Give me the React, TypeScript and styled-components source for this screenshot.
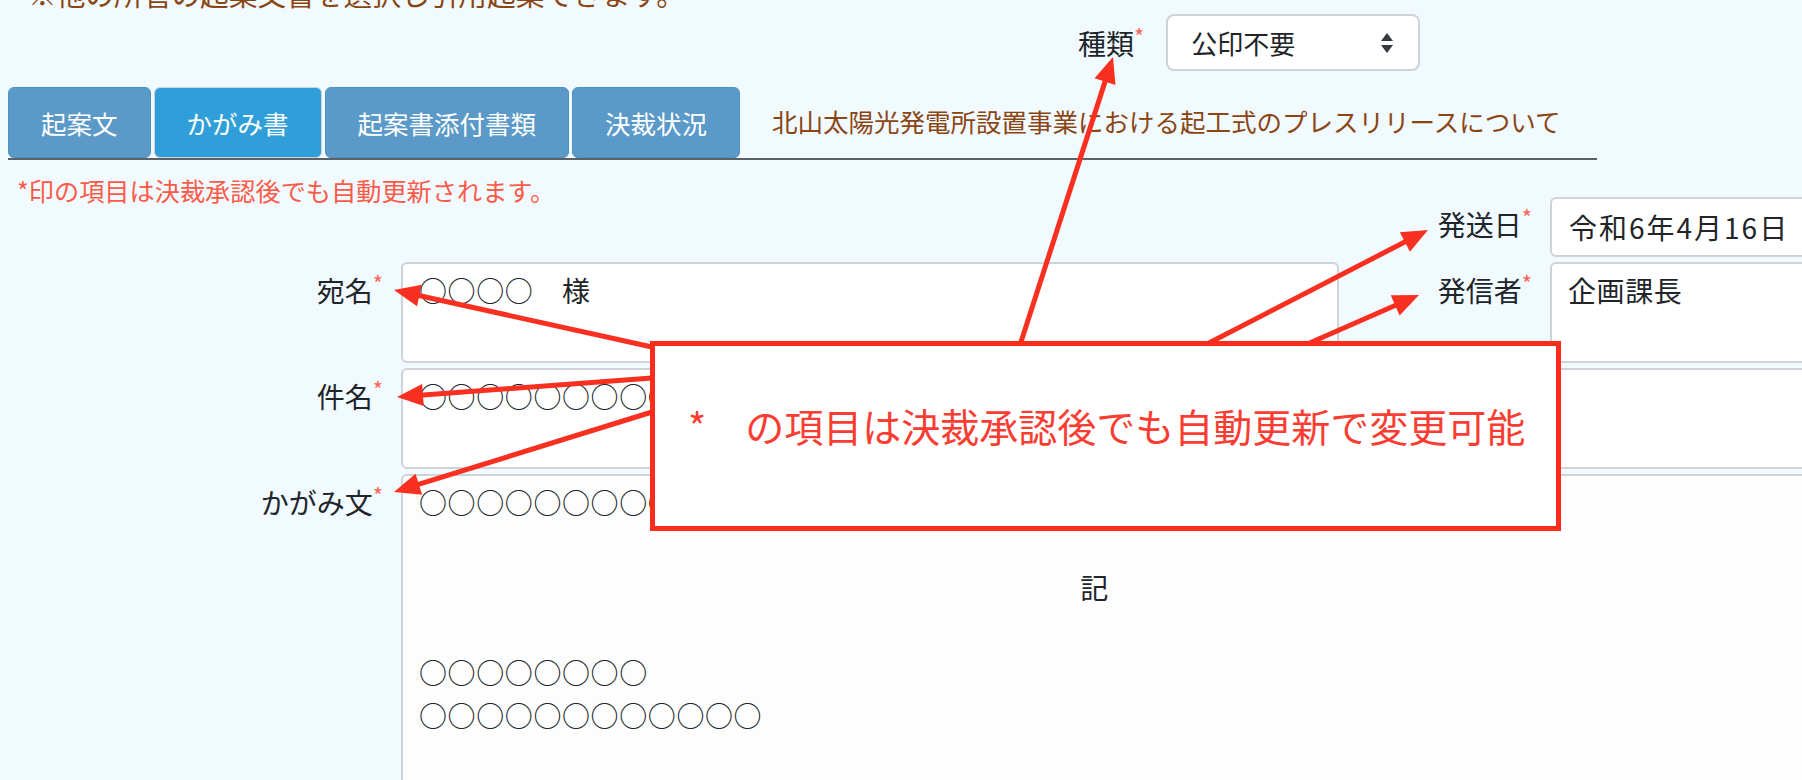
import React from "react";
import styled, { createGlobalStyle } from "styled-components";

const GlobalStyle = createGlobalStyle`
  html, body {
    margin: 0;
    padding: 0;
    background: #f0faff;
    overflow: hidden;
  }
  body {
    font-family: "Noto Sans CJK JP", "Noto Sans", sans-serif;
    color: #212529;
  }
`;

const Page = styled.div`
  position: relative;
  width: 1802px;
  height: 780px;
  overflow: hidden;
  background: #f0faff;
`;

const TopNote = styled.p`
  margin: -21px 0 0 0;
  padding-left: 28px;
  height: 30px;
  line-height: 30px;
  font-size: 28.7px;
  color: #8b4513;
  white-space: nowrap;
`;

const KindRow = styled.div`
  display: flex;
  align-items: center;
  gap: 22px;
  margin-top: 5px;
  padding-left: 1078px;
  height: 57px;
`;

const KindLabel = styled.span`
  font-size: 28px;
  line-height: 42px;
  white-space: nowrap;
`;

const Req = styled.span`
  color: #ff6652;
  font-size: 22px;
  vertical-align: super;
  line-height: 0;
`;

const Select = styled.div`
  box-sizing: border-box;
  width: 254px;
  height: 57px;
  display: flex;
  align-items: center;
  justify-content: space-between;
  padding: 0 24px 0 23px;
  background: #fff;
  border: 2px solid #cdd3d9;
  border-radius: 8px;
  font-size: 26px;
`;

const TabBar = styled.div`
  display: flex;
  gap: 3px;
  margin: 16px 0 0 8px;
  width: 1589px;
  height: 71px;
  border-bottom: 2px solid #5b6166;
`;

const Tab = styled.div<{ $active?: boolean }>`
  box-sizing: border-box;
  display: flex;
  align-items: center;
  height: 71px;
  padding: 0 32px;
  border: 1px solid ${(p) => (p.$active ? "#cfd3d6" : "#4d91c6")};
  border-radius: 6px;
  background: ${(p) => (p.$active ? "#309fd9" : "#5b9ac8")};
  color: #fff;
  font-size: 25.5px;
  white-space: nowrap;
`;

const DocTitle = styled.div`
  align-self: center;
  margin-left: 29px;
  padding-bottom: 4px;
  font-size: 25.5px;
  color: #8b4513;
  white-space: nowrap;
`;

const FormGrid = styled.div`
  display: grid;
  grid-template-columns: 401px 938px 211px 280px;
  grid-template-rows: 86px 101px 101px 330px;
  row-gap: 5px;
  margin-top: 11px;
`;

const Notice = styled.div`
  grid-column: 1 / 3;
  align-self: start;
  padding-left: 17px;
  font-size: 25.2px;
  line-height: 38px;
  color: #fd5a48;
  white-space: nowrap;
`;

const Label = styled.div<{ $pad?: number }>`
  align-self: start;
  padding: ${(p) => p.$pad ?? 7}px 18px 0 0;
  text-align: right;
  font-size: 28px;
  line-height: 42px;
  white-space: nowrap;
`;

const Box = styled.div<{ $soft?: boolean }>`
  box-sizing: border-box;
  border: 2px solid #cdd3d9;
  border-radius: 6px;
  background: ${(p) => (p.$soft ? "#fdfdfd" : "#fff")};
  padding: 5px 16px;
  font-size: 28px;
  line-height: 42px;
  letter-spacing: 0.6px;
  white-space: pre;
  overflow: hidden;
`;

const DateBox = styled(Box)`
  align-self: end;
  height: 60px;
  display: flex;
  align-items: center;
  padding: 0 17px;
  letter-spacing: 2px;
`;

const BigBox = styled(Box)`
  grid-column: 2 / 5;
  line-height: 42.6px;
`;

const KiLine = styled.div`
  text-align: center;
  padding-right: 42px;
`;

const Callout = styled.div`
  position: absolute;
  left: 650px;
  top: 341px;
  z-index: 2;
  box-sizing: border-box;
  width: 911px;
  height: 190px;
  display: flex;
  align-items: center;
  padding: 0 0 22px 33px;
  background: #fff;
  border: 5px solid #fa2c1c;
  font-size: 39px;
  color: #f93d33;
  white-space: pre;
`;

const ArrowLayer = styled.svg`
  position: absolute;
  left: 0;
  top: 0;
  z-index: 1;
  pointer-events: none;
`;

const tabs = ["起案文", "かがみ書", "起案書添付書類", "決裁状況"];

const arrows = [
  { x1: 1020, y1: 345, x2: 1113, y2: 57 },
  { x1: 1205, y1: 345, x2: 1428, y2: 230 },
  { x1: 1305, y1: 345, x2: 1419, y2: 295 },
  { x1: 652, y1: 347, x2: 394, y2: 290 },
  { x1: 652, y1: 378, x2: 397, y2: 397 },
  { x1: 652, y1: 412, x2: 394, y2: 492 },
];

function SortIcon() {
  return (
    <svg width="14" height="22" viewBox="0 0 14 22">
      <path d="M7 1 L13 9 L1 9 Z" fill="#343a40" />
      <path d="M7 21 L13 13 L1 13 Z" fill="#343a40" />
    </svg>
  );
}

function Arrows() {
  return (
    <ArrowLayer width="1802" height="780">
      {arrows.map((a, i) => {
        const dx = a.x2 - a.x1;
        const dy = a.y2 - a.y1;
        const len = Math.hypot(dx, dy);
        const ux = dx / len;
        const uy = dy / len;
        const head = 26;
        const half = 11;
        const bx = a.x2 - ux * head;
        const by = a.y2 - uy * head;
        const px = -uy;
        const py = ux;
        const pts = `${a.x2},${a.y2} ${bx + px * half},${by + py * half} ${bx - px * half},${by - py * half}`;
        return (
          <g key={i}>
            <line
              x1={a.x1}
              y1={a.y1}
              x2={bx + ux * 3}
              y2={by + uy * 3}
              stroke="#f92f1f"
              strokeWidth="5"
            />
            <polygon points={pts} fill="#f92f1f" />
          </g>
        );
      })}
    </ArrowLayer>
  );
}

export default function App() {
  return (
    <Page>
      <GlobalStyle />
      <TopNote>※他の所管の起案文書を選択し引用起案できます。</TopNote>
      <KindRow>
        <KindLabel>
          種類<Req>*</Req>
        </KindLabel>
        <Select>
          公印不要
          <SortIcon />
        </Select>
      </KindRow>
      <TabBar>
        {tabs.map((t) => (
          <Tab key={t} $active={t === "かがみ書"}>
            {t}
          </Tab>
        ))}
        <DocTitle>北山太陽光発電所設置事業における起工式のプレスリリースについて</DocTitle>
      </TabBar>
      <FormGrid>
        <Notice>*印の項目は決裁承認後でも自動更新されます。</Notice>
        <Label $pad={32}>
          発送日<Req>*</Req>
        </Label>
        <DateBox>令和6年4月16日</DateBox>

        <Label>
          宛名<Req>*</Req>
        </Label>
        <Box>○○○○　様</Box>
        <Label>
          発信者<Req>*</Req>
        </Label>
        <Box>企画課長</Box>

        <Label>
          件名<Req>*</Req>
        </Label>
        <Box>○○○○○○○○○○○○○○</Box>
        <Label />
        <Box />

        <Label>
          かがみ文<Req>*</Req>
        </Label>
        <BigBox $soft>
          <div>○○○○○○○○○○○○○○</div>
          <div> </div>
          <KiLine>記</KiLine>
          <div> </div>
          <div>○○○○○○○○</div>
          <div>○○○○○○○○○○○○</div>
        </BigBox>
      </FormGrid>
      <Arrows />
      <Callout>*　の項目は決裁承認後でも自動更新で変更可能</Callout>
    </Page>
  );
}
